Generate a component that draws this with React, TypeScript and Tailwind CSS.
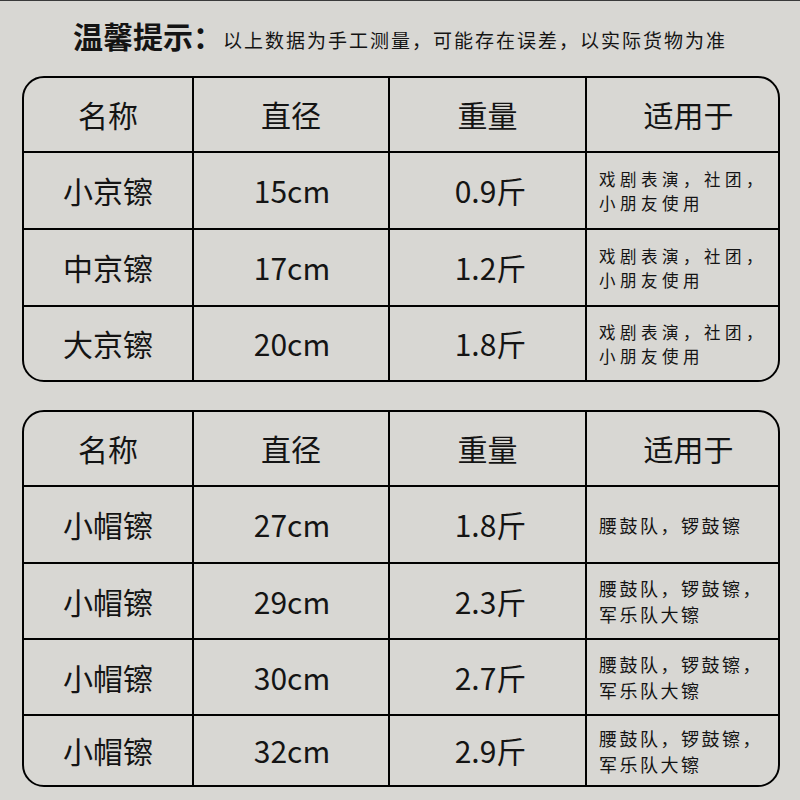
const FONT = { fontFamily: '"Noto Sans CJK SC", "Noto Sans", sans-serif' };

type Row = { name: string; size: string; weight: string; use: string[] };

const JING: Row[] = [
  { name: "小京镲", size: "15cm", weight: "0.9斤", use: ["戏剧表演，社团，", "小朋友使用"] },
  { name: "中京镲", size: "17cm", weight: "1.2斤", use: ["戏剧表演，社团，", "小朋友使用"] },
  { name: "大京镲", size: "20cm", weight: "1.8斤", use: ["戏剧表演，社团，", "小朋友使用"] },
];

const MAO: Row[] = [
  { name: "小帽镲", size: "27cm", weight: "1.8斤", use: ["腰鼓队，锣鼓镲"] },
  { name: "小帽镲", size: "29cm", weight: "2.3斤", use: ["腰鼓队，锣鼓镲，", "军乐队大镲"] },
  { name: "小帽镲", size: "30cm", weight: "2.7斤", use: ["腰鼓队，锣鼓镲，", "军乐队大镲"] },
  { name: "小帽镲", size: "32cm", weight: "2.9斤", use: ["腰鼓队，锣鼓镲，", "军乐队大镲"] },
];

function SpecTable({
  rows,
  rowHeights,
  useClass,
}: {
  rows: Row[];
  rowHeights: number[];
  useClass: string;
}) {
  const cell = "flex items-center justify-center text-[30px] font-normal text-[#141414] border-black";
  return (
    <div className="w-[758px] ml-[22px] border-2 border-black rounded-[22px] overflow-hidden">
      <div className="grid grid-cols-[170px_196px_197px_191px] h-[75px] border-b-2 border-black">
        <div className={`${cell} border-r-2`}>名称</div>
        <div className={`${cell} border-r-2`}>直径</div>
        <div className={`${cell} border-r-2`}>重量</div>
        <div className={`${cell} pl-[12px]`}>适用于</div>
      </div>
      {rows.map((r, i) => {
        const last = i === rows.length - 1;
        return (
          <div
            key={i}
            className={`grid grid-cols-[170px_196px_197px_191px] border-black ${last ? "" : "border-b-2"}`}
            style={{ height: rowHeights[i] }}
          >
            <div className={`${cell} border-r-2`}>{r.name}</div>
            <div className={`${cell} border-r-2 pl-[2px]`}>{r.size}</div>
            <div className={`${cell} border-r-2 pl-[6px]`}>{r.weight}</div>
            <div className={`flex flex-col justify-center pl-[12px] text-[#141414] ${useClass}`}>
              {r.use.map((line) => (
                <div key={line} className="whitespace-nowrap">
                  {line}
                </div>
              ))}
            </div>
          </div>
        );
      })}
    </div>
  );
}

export default function App() {
  return (
    <div
      className="w-[800px] h-[800px] bg-[#d8d7d3] border-t border-[#3a3a3a] overflow-hidden"
      style={FONT}
    >
      <div className="h-[75px] flex items-baseline pl-[73px] pt-[19px] text-[#141414]">
        <span className="text-[30px] leading-[30px] font-bold">温馨提示：</span>
        <span className="text-[19px] leading-[30px] tracking-[2px]">以上数据为手工测量，可能存在误差，以实际货物为准</span>
      </div>
      <SpecTable
        rows={JING}
        rowHeights={[77, 77, 73]}
        useClass="text-[16.5px] leading-[24px] tracking-[4.5px]"
      />
      <div className="h-[28px]" />
      <SpecTable
        rows={MAO}
        rowHeights={[77, 76, 76, 69]}
        useClass="text-[18px] leading-[26px] tracking-[2.5px]"
      />
    </div>
  );
}
